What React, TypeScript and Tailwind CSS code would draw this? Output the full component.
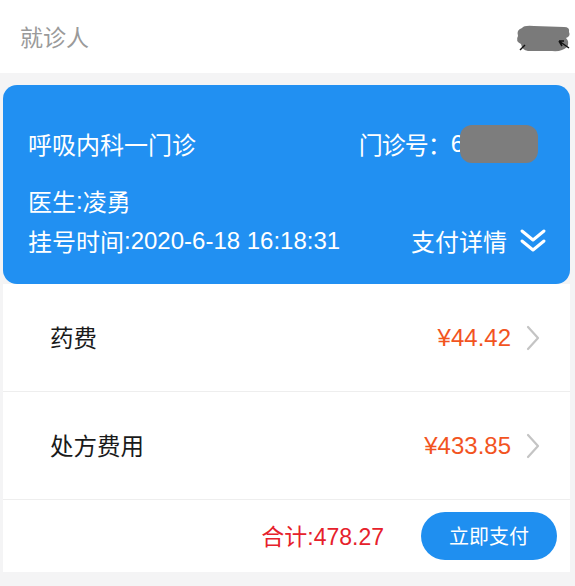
import React from 'react';

const items = [
  { name: '药费', amount: '¥44.42' },
  { name: '处方费用', amount: '¥433.85' },
];

const latin = { fontFamily: '"Liberation Sans", "Noto Sans CJK SC", sans-serif' };

export default function App() {
  return (
    <div
      className="w-[575px] h-[586px] bg-[#f4f4f5] flex flex-col overflow-hidden"
      style={{ fontFamily: '"Noto Sans CJK SC", "Noto Sans", sans-serif' }}
    >
      {/* header */}
      <div className="h-[73px] bg-white flex items-center justify-between pl-[20px] pr-[3px] shrink-0">
        <span className="text-[23px] text-[#9a9a9a] leading-none">就诊人</span>
        {/* redacted name */}
        <svg width="58" height="30" viewBox="0 0 58 30" className="mt-[4px]">
          <path d="M8 4 Q10 1 20 2 L50 3 Q56 3 55 8 Q57 12 52 14 Q56 18 53 23 Q48 28 38 27 L14 27 Q8 26 7 20 Q1 17 4 12 Q2 6 8 4 Z" fill="#7a7a7a" />
          <path d="M6 26 L11 21" stroke="#111" strokeWidth="1.5" />
          <path d="M45 17 L55 24 M45 17 L48 22 M45 17 L50 17" stroke="#111" strokeWidth="1.5" fill="none" />
        </svg>
      </div>

      <div className="pt-[12px] pl-[3px] pr-[5px]">
        {/* visit card */}
        <div className="bg-[#2190f2] rounded-[14px] h-[199px] pl-[25px] pr-[23px] pt-[42px] text-white text-[24px] leading-none">
          <div className="flex justify-between items-center h-[34px]">
            <span>呼吸内科一门诊</span>
            <span className="flex items-center mr-[9px]">
              <span className="tracking-[-1px]">门诊号：</span>
              <span style={latin}>6</span>
              <span className="inline-block w-[78px] h-[38px] -ml-[4px] bg-[#7d7d7d] rounded-[12px]" />
            </span>
          </div>
          <div className="mt-[27px] h-[26px] flex items-center">
            医生<span style={latin}>:</span>凌勇
          </div>
          <div className="mt-[12px] flex justify-between items-center h-[30px]">
            <span className="flex items-center">
              挂号时间<span style={latin}>:2020-6-18 16:18:31</span>
            </span>
            <span className="flex items-center gap-[12px]">
              支付详情
              <svg width="28" height="26" viewBox="0 0 28 26" fill="none" stroke="white" strokeWidth="3" strokeLinecap="round" strokeLinejoin="round">
                <path d="M3 3 L14 12 L25 3" />
                <path d="M3 13 L14 22 L25 13" />
              </svg>
            </span>
          </div>
        </div>

        {/* fee rows */}
        <div className="bg-white">
          {items.map((item) => (
            <div key={item.name} className="h-[108px] border-b border-[#eeeeee] flex items-center justify-between pl-[47px] pr-[30px]">
              <span className="text-[23.5px] text-[#1a1a1a] leading-none">{item.name}</span>
              <span className="flex items-center gap-[15px]">
                <span className="text-[24px] text-[#f2541f] leading-none" style={latin}>
                  {item.amount}
                </span>
                <svg width="14" height="26" viewBox="0 0 14 26" fill="none" stroke="#c4c4c4" strokeWidth="2.2" strokeLinecap="round" strokeLinejoin="round">
                  <path d="M2 2 L12 13 L2 24" />
                </svg>
              </span>
            </div>
          ))}
          <div className="h-[72px] flex items-center justify-end pr-[13px]">
            <span className="text-[23px] text-[#e6212b] mr-[37px] leading-none">
              合计<span style={latin}>:478.27</span>
            </span>
            <button className="w-[136px] h-[48px] rounded-full bg-[#1f8ff0] text-white text-[20px]">立即支付</button>
          </div>
        </div>
      </div>
    </div>
  );
}
